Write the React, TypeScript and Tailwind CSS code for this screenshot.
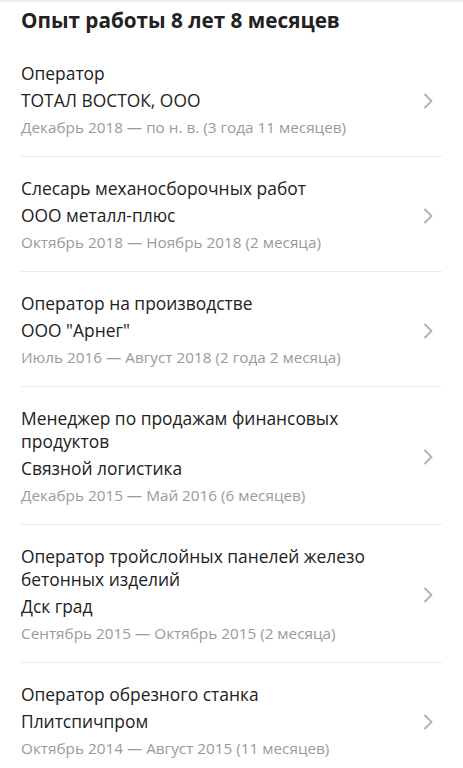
const jobs = [
  { title: "Оператор", company: "ТОТАЛ ВОСТОК, ООО", period: "Декабрь 2018 — по н. в. (3 года 11 месяцев)" },
  { title: "Слесарь механосборочных работ", company: "ООО металл-плюс", period: "Октябрь 2018 — Ноябрь 2018 (2 месяца)" },
  { title: "Оператор на производстве", company: "ООО \"Арнег\"", period: "Июль 2016 — Август 2018 (2 года 2 месяца)" },
  { title: "Менеджер по продажам финансовых продуктов", company: "Связной логистика", period: "Декабрь 2015 — Май 2016 (6 месяцев)" },
  { title: "Оператор тройслойных панелей железо бетонных изделий", company: "Дск град", period: "Сентябрь 2015 — Октябрь 2015 (2 месяца)" },
  { title: "Оператор обрезного станка", company: "Плитспичпром", period: "Октябрь 2014 — Август 2015 (11 месяцев)" },
];

const ChevronRight = () => (
  <svg width="12" height="18" viewBox="0 0 12 18" fill="none">
    <path d="M3 2.5l6.5 6.5L3 15.5" stroke="#b3b3b3" strokeWidth="2" strokeLinecap="round" strokeLinejoin="round" />
  </svg>
);

export default function App() {
  return (
    <div className="min-h-[768px] w-[463px] bg-white font-['Open_Sans',sans-serif] border-t-2 border-[#f0f0f0] overflow-hidden">
      <h1 className="px-[21px] pt-[2px] text-[20.7px] leading-[32px] font-bold text-[#222]">
        Опыт работы 8 лет 8 месяцев
      </h1>
      <div className="mt-[6px] mx-[21px]">
        {jobs.map((job, i) => (
          <div
            key={i}
            className={`flex items-center pt-[20px] pb-[17px] ${i < jobs.length - 1 ? "border-b border-[#ebebeb]" : ""}`}
          >
            <div className="flex-1 pr-[30px]">
              <div className="text-[17.4px] leading-[23px] text-[#222]">{job.title}</div>
              <div className="mt-[4px] text-[17.4px] leading-[23px] text-[#222]">{job.company}</div>
              <div className="mt-[4px] text-[15.3px] leading-[23px] text-[#9a9a9a]">{job.period}</div>
            </div>
            <div className="mr-[8px]">
              <ChevronRight />
            </div>
          </div>
        ))}
      </div>
    </div>
  );
}
